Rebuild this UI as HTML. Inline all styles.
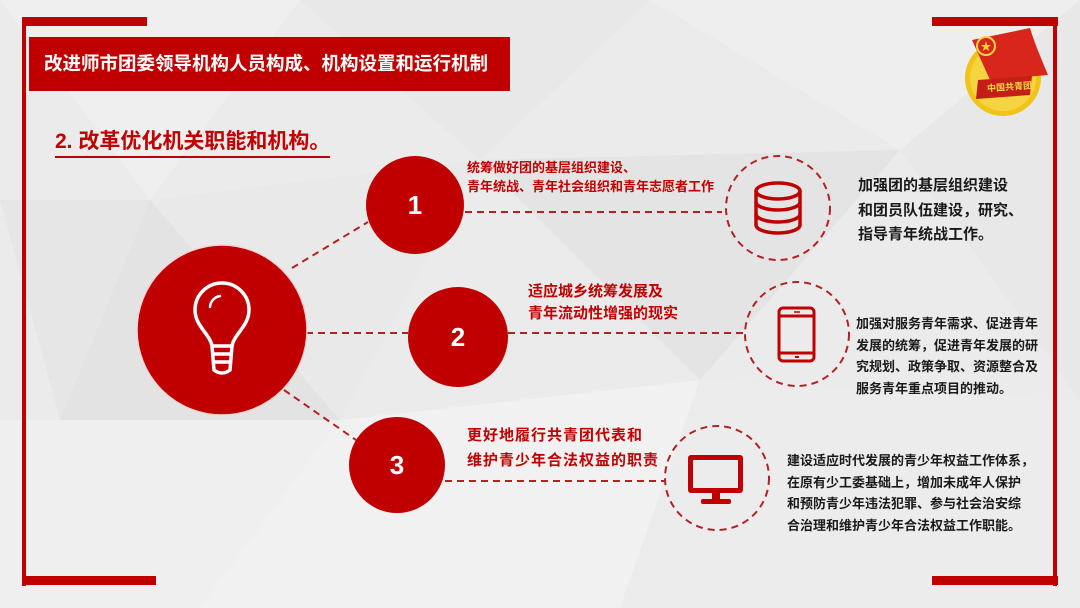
<!DOCTYPE html>
<html><head><meta charset="utf-8"><style>
body{margin:0;width:1080px;height:608px;overflow:hidden;font-family:"Liberation Sans","Noto Sans CJK SC",sans-serif;}
.wrap{position:relative;width:1080px;height:608px;background:#ebebeb;}
.t{position:absolute;font-weight:bold;white-space:nowrap;}
</style></head><body><div class="wrap">
<svg width="1080" height="608" style="position:absolute;left:0;top:0">
<polygon points="0,0 300,0 150,200" fill="#efefef"/>
<polygon points="300,0 650,0 480,160" fill="#e8e8e8"/>
<polygon points="650,0 1080,0 900,150" fill="#eeeeee"/>
<polygon points="0,200 150,200 60,420" fill="#e6e6e6"/>
<polygon points="150,200 480,160 340,420" fill="#e9e9e9"/>
<polygon points="480,160 900,150 700,380" fill="#e4e4e4"/>
<polygon points="900,150 1080,0 1080,400" fill="#e8e8e8"/>
<polygon points="0,420 340,420 200,608 0,608" fill="#efefef"/>
<polygon points="340,420 700,380 620,608 200,608" fill="#f1f1f1"/>
<polygon points="700,380 1080,400 1080,608 620,608" fill="#ececec"/>
<polygon points="60,420 150,200 340,420" fill="#e3e3e3"/>
<rect x="22" y="17" width="125" height="9" fill="#c00000"/>
<rect x="22" y="17" width="4" height="569" fill="#c00000"/>
<rect x="22" y="576" width="134" height="9" fill="#c00000"/>
<rect x="932" y="17" width="126" height="9" fill="#c00000"/>
<rect x="1053" y="17" width="4" height="569" fill="#c00000"/>
<rect x="932" y="576" width="126" height="9" fill="#c00000"/>
<rect x="29" y="37" width="481" height="54" fill="#c00000"/>
<g stroke="#b22222" stroke-width="2" stroke-dasharray="7,5" fill="none">
<line x1="292" y1="268" x2="368" y2="222"/>
<line x1="306" y1="333" x2="408" y2="333"/>
<line x1="284" y1="390" x2="356" y2="440"/>
<line x1="465" y1="212" x2="722" y2="212"/>
<line x1="508" y1="333" x2="745" y2="333"/>
<line x1="445" y1="481" x2="665" y2="481"/>
<circle cx="778" cy="208" r="52"/>
<circle cx="797" cy="334" r="52"/>
<circle cx="717" cy="478" r="52"/>
</g>
<circle cx="222" cy="330" r="85" fill="#c00000" stroke="#f3d6d6" stroke-width="1.5"/>
<circle cx="415" cy="205" r="49" fill="#c00000"/>
<circle cx="458" cy="337" r="50" fill="#c00000"/>
<circle cx="397" cy="465" r="48" fill="#c00000"/>
<g fill="#fff" font-family="Liberation Sans,sans-serif" font-weight="bold" font-size="26" text-anchor="middle">
<text x="415" y="214">1</text><text x="458" y="346">2</text><text x="397" y="474">3</text></g>
<g stroke="#fff" stroke-width="3.5" fill="none" stroke-linecap="round" stroke-linejoin="round">
<path d="M212,346 C210,334 195,326 195,310 A27,27 0 0 1 249,310 C249,326 234,334 232,346 Z"/>
<path d="M212,346 L214,370 Q222,376 230,370 L232,346"/>
<path d="M213,354 L231,354 M214,362 L230,362"/>
<path d="M210,307 A12,12 0 0 1 220,296" stroke-width="2.5"/>
</g>
<g stroke="#c00000" stroke-width="3.5" fill="none">
<ellipse cx="778" cy="191" rx="22" ry="8"/>
<path d="M756,191 V225 A22,8 0 0 0 800,225 V191"/>
<path d="M756,202 A22,8 0 0 0 800,202 M756,214 A22,8 0 0 0 800,214"/>
</g>
<g stroke="#c00000" stroke-width="3" fill="none">
<rect x="779" y="308" width="35" height="53" rx="4"/>
<line x1="779" y1="316" x2="814" y2="316"/><line x1="779" y1="353" x2="814" y2="353"/>
<line x1="794" y1="312" x2="800" y2="312" stroke-width="1.5"/><line x1="795" y1="357" x2="799" y2="357" stroke-width="2"/>
</g>
<g fill="#c00000">
<rect x="688" y="455" width="55" height="38" rx="3"/>
<rect x="693" y="460" width="45" height="28" fill="#ececec"/>
<rect x="712" y="493" width="8" height="7"/>
<rect x="701" y="499" width="30" height="5" rx="2"/>
</g>
<circle cx="1003" cy="78" r="38" fill="#f0c419"/>
<circle cx="1003" cy="78" r="33" fill="#f5d442"/>
<path d="M972,40 L1030,28 C1035,45 1042,60 1048,75 L990,80 Z" fill="#d9261c"/>
<circle cx="986" cy="46" r="9" fill="none" stroke="#f5d442" stroke-width="2"/>
<text x="986" y="50" fill="#f5d442" font-size="11" text-anchor="middle">★</text>
<path d="M978,80 L1032,76 L1030,95 L976,99 Z" fill="#c41e16"/>
</svg>
<div class="t" style="left:44px;top:50px;font-size:18.5px;color:#fff;">改进师市团委领导机构人员构成、机构设置和运行机制</div>
<div class="t" style="left:55px;top:125px;font-size:21px;color:#c00000;border-bottom:2px solid #c00000;padding-bottom:1px;width:275px;">2. 改革优化机关职能和机构。</div>
<div style="position:absolute;left:987px;top:80px;font-size:9px;color:#f5d442;font-weight:bold;transform:rotate(-4deg)">中国共青团</div>
<div class="t" style="left:467px;top:158px;font-size:13px;line-height:19px;color:#c00000;">统筹做好团的基层组织建设、<br>青年统战、青年社会组织和青年志愿者工作</div>
<div class="t" style="left:528px;top:281px;font-size:15px;line-height:22px;color:#c00000;">适应城乡统筹发展及<br>青年流动性增强的现实</div>
<div class="t" style="left:467px;top:423px;font-size:15px;line-height:25px;letter-spacing:1px;color:#c00000;">更好地履行共青团代表和<br>维护青少年合法权益的职责</div>
<div class="t" style="left:858px;top:174px;font-size:15px;line-height:24.5px;color:#1a1a1a;">加强团的基层组织建设<br>和团员队伍建设，研究、<br>指导青年统战工作。</div>
<div class="t" style="left:856px;top:313px;font-size:13px;line-height:21.5px;color:#1a1a1a;">加强对服务青年需求、促进青年<br>发展的统筹，促进青年发展的研<br>究规划、政策争取、资源整合及<br>服务青年重点项目的推动。</div>
<div class="t" style="left:787px;top:450px;font-size:13px;line-height:21.5px;color:#1a1a1a;">建设适应时代发展的青少年权益工作体系，<br>在原有少工委基础上，增加未成年人保护<br>和预防青少年违法犯罪、参与社会治安综<br>合治理和维护青少年合法权益工作职能。</div>
</div></body></html>
